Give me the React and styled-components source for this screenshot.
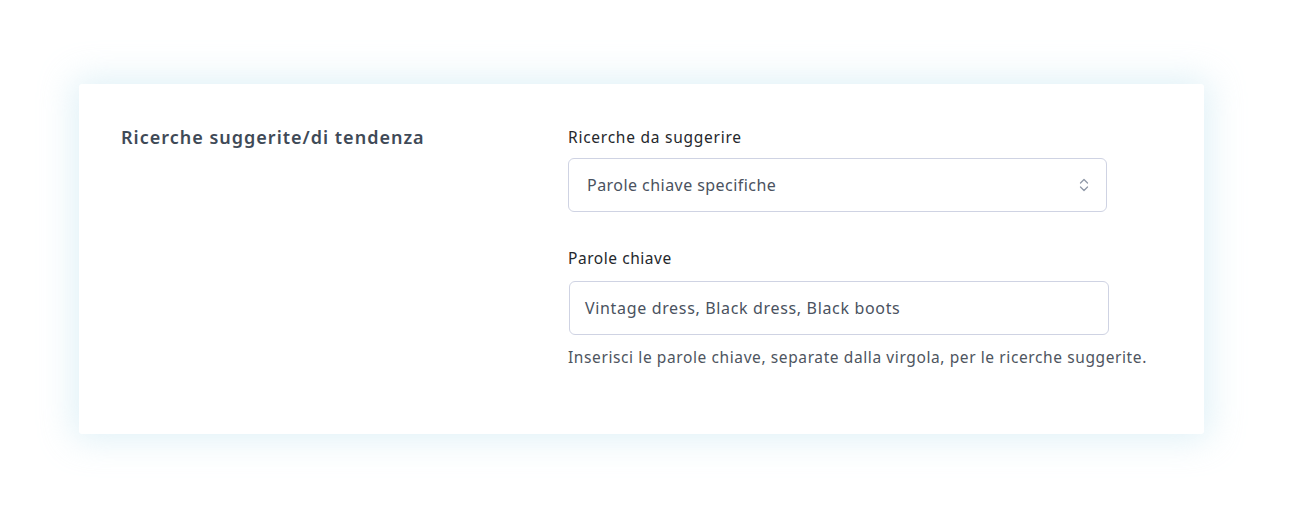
import React from "react";
import styled, { createGlobalStyle } from "styled-components";

const Global = createGlobalStyle`
  body {
    margin: 0;
    background: #ffffff;
    font-family: "Noto Sans", "Open Sans", sans-serif;
  }
`;

const Page = styled.div`
  width: 1300px;
  height: 520px;
  padding: 84px 0 0 79px;
  box-sizing: border-box;
`;

const Card = styled.section`
  width: 1125px;
  height: 350px;
  box-sizing: border-box;
  background: #fff;
  border-radius: 3px;
  box-shadow: 0 0 34px 6px rgba(186, 225, 238, 0.45);
  padding: 41px 0 0 42px;
  display: grid;
  grid-template-columns: 447px 1fr;
`;

const Heading = styled.h2`
  margin: 0;
  font-size: 18px;
  line-height: 24px;
  font-weight: 600;
  letter-spacing: 1px;
  color: #3f4a57;
`;

const Fields = styled.div`
  display: flex;
  flex-direction: column;
`;

const Label = styled.label`
  display: block;
  font-size: 15.5px;
  line-height: 20px;
  letter-spacing: ${(p) => (p.$first ? "0.75px" : "0.55px")};
  color: #25282c;
  margin: ${(p) => (p.$first ? "2px 0 11px" : "36px 0 13px")};
`;

const Box = styled.div`
  width: ${(p) => (p.$wide ? "540px" : "539px")};
  height: 54px;
  box-sizing: border-box;
  border: 1px solid #cfd3e3;
  border-radius: 6px;
  padding: 0 16px 0 ${(p) => (p.$wide ? "15px" : "18px")};
  display: flex;
  align-items: center;
  justify-content: space-between;
  font-size: 16px;
  letter-spacing: ${(p) => (p.$wide ? "0.66px" : "0.45px")};
  color: #4a5260;
  background: #fff;
  margin-left: ${(p) => (p.$wide ? "1px" : "0")};
`;

const Help = styled.p`
  margin: 12px 0 0;
  font-size: 15.5px;
  line-height: 20px;
  letter-spacing: 0.6px;
  color: #4e5560;
  white-space: nowrap;
`;

const Chevron = () => (
  <svg width="12" height="16" viewBox="0 0 12 16" fill="none">
    <path d="M2.5 6 L6 2.5 L9.5 6" stroke="#8f98a8" strokeWidth="1.3" strokeLinecap="round" strokeLinejoin="round" />
    <path d="M2.5 10 L6 13.5 L9.5 10" stroke="#8f98a8" strokeWidth="1.3" strokeLinecap="round" strokeLinejoin="round" />
  </svg>
);

export default function App() {
  return (
    <Page>
      <Global />
      <Card>
        <Heading>Ricerche suggerite/di tendenza</Heading>
        <Fields>
          <Label $first>Ricerche da suggerire</Label>
          <Box>
            <span>Parole chiave specifiche</span>
            <Chevron />
          </Box>
          <Label>Parole chiave</Label>
          <Box $wide>
            <span>Vintage dress, Black dress, Black boots</span>
          </Box>
          <Help>Inserisci le parole chiave, separate dalla virgola, per le ricerche suggerite.</Help>
        </Fields>
      </Card>
    </Page>
  );
}
